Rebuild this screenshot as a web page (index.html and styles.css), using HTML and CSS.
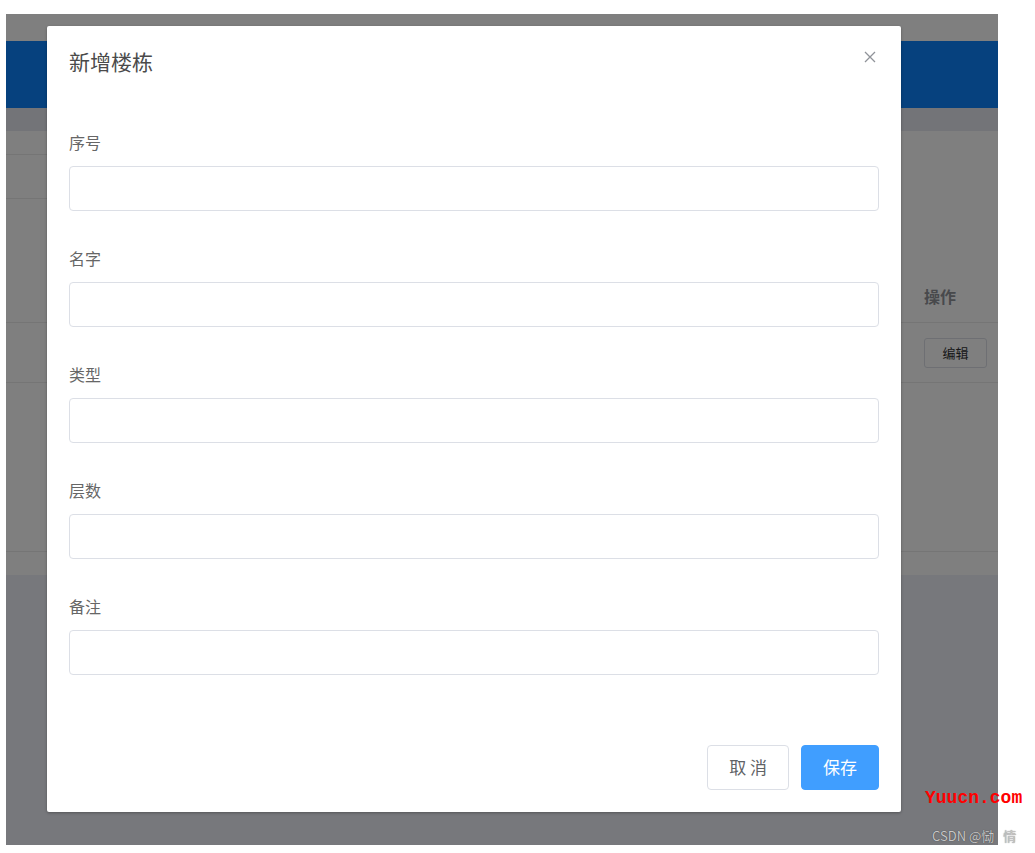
FILE: index.html
```html
<!DOCTYPE html>
<html lang="zh-CN">
<head>
  <meta charset="UTF-8" />
  <title>新增楼栋</title>
  <link rel="stylesheet" href="styles.css">
</head>
<body>
  <div class="shot">
    <div class="page">
      <div class="page-top"></div>
      <div class="page-header"></div>
      <div class="page-tabs"></div>
      <div class="page-main">
        <div class="toolbar">
          <div class="toolbar-row"></div>
          <div class="toolbar-row tall"></div>
        </div>
        <div class="table">
          <div class="table-head">
            <div class="cell-op"><span class="th-op">操作</span></div>
          </div>
          <div class="table-row">
            <div class="cell-op"><button class="btn-mini">编辑</button></div>
          </div>
          <div class="table-empty"></div>
        </div>
      </div>
      <div class="page-foot"></div>
    </div>

    <div class="mask"></div>

    <div class="dialog">
      <div class="dialog-header">
        <span class="dialog-title">新增楼栋</span>
        <button class="dialog-close" aria-label="Close">
          <svg width="12" height="12" viewBox="0 0 12 12">
            <path d="M1 1L11 11M11 1L1 11" stroke="#909399" stroke-width="1.3" fill="none" />
          </svg>
        </button>
      </div>

      <div class="dialog-body">
        <div class="form-item">
          <label>序号</label>
          <input type="text" />
        </div>
        <div class="form-item">
          <label>名字</label>
          <input type="text" />
        </div>
        <div class="form-item">
          <label>类型</label>
          <input type="text" />
        </div>
        <div class="form-item">
          <label>层数</label>
          <input type="text" />
        </div>
        <div class="form-item">
          <label>备注</label>
          <input type="text" />
        </div>
      </div>

      <div class="dialog-footer">
        <button class="btn">取 消</button>
        <button class="btn btn-primary">保存</button>
      </div>
    </div>
  </div>

  <div class="mark">Yuucn.com</div>
  <div class="credit">CSDN @恸<span class="credit-tail">情</span></div>
</body>
</html>
```

FILE: styles.css
```css
body {
  margin: 0;
  background: #fff;
  font-family: "Noto Sans CJK SC", "Noto Sans", sans-serif;
  position: relative;
  height: 853px;
  overflow: hidden;
}

.shot {
  margin: 14px 0 0 6px;
  width: 992px;
  height: 831px;
  position: relative;
  overflow: hidden;
}

/* page behind the dialog */
.page {
  height: 100%;
  display: flex;
  flex-direction: column;
  background: #fff;
}

.page-top {
  height: 27px;
}

.page-header {
  height: 67px;
  background: #0c82fc;
}

.page-tabs {
  height: 23px;
  background: #e6e8f0;
}

.page-main {
  height: 444px;
  box-sizing: border-box;
  padding-bottom: 23px;
}

.toolbar {
  width: 860px;
}

.toolbar-row {
  height: 24px;
  box-sizing: border-box;
  border-bottom: 1px solid #ebebeb;
}

.toolbar-row.tall {
  height: 44px;
}

.table-head,
.table-row {
  display: flex;
  justify-content: flex-end;
  box-sizing: border-box;
  border-bottom: 1px solid #ebebeb;
}

.table-head {
  height: 124px;
  align-items: flex-end;
  padding-bottom: 14px;
}

.table-row {
  height: 60px;
  align-items: center;
}

.table-empty {
  height: 169px;
  box-sizing: border-box;
  border-bottom: 1px solid #ebebeb;
}

.cell-op {
  width: 74px;
}

.th-op {
  font-size: 16px;
  line-height: 23px;
  font-weight: bold;
  color: #909399;
}

.btn-mini {
  width: 63px;
  height: 30px;
  padding: 0;
  border: 1px solid #dcdfe6;
  border-radius: 3px;
  background: #fff;
  color: #303133;
  font-family: inherit;
  font-size: 13px;
}

.page-foot {
  flex: 1;
  background: #eef0f8;
}

.mask {
  position: absolute;
  inset: 0;
  background: rgba(0, 0, 0, 0.5);
}

/* dialog */
.dialog {
  position: absolute;
  left: 41px;
  top: 12px;
  width: 854px;
  background: #fff;
  border-radius: 2px;
  box-shadow: 0 1px 3px rgba(0, 0, 0, 0.3);
}

.dialog-header {
  position: relative;
  padding: 23px 22px 2px;
}

.dialog-title {
  display: block;
  font-size: 21px;
  line-height: 24px;
  color: #4a4a4a;
}

.dialog-close {
  position: absolute;
  top: 25px;
  right: 25px;
  width: 12px;
  height: 12px;
  padding: 0;
  border: none;
  background: none;
  display: flex;
}

.dialog-body {
  padding: 56px 22px 0;
}

.form-item {
  display: flex;
  flex-direction: column;
  margin-bottom: 36px;
}

.form-item:last-child {
  margin-bottom: 0;
}

.form-item label {
  font-size: 16px;
  line-height: 22px;
  color: #666;
  margin-bottom: 13px;
}

.form-item input {
  height: 45px;
  box-sizing: border-box;
  border: 1px solid #dcdfe6;
  border-radius: 4px;
  background: #fff;
  padding: 0 15px;
}

.dialog-footer {
  display: flex;
  justify-content: flex-end;
  gap: 12px;
  padding: 70px 22px 22px;
}

.btn {
  height: 45px;
  padding: 0 21px 3px;
  border: 1px solid #dcdfe6;
  border-radius: 4px;
  background: #fff;
  color: #606266;
  font-family: inherit;
  font-size: 17px;
  line-height: 1;
}

.btn-primary {
  background: #409eff;
  border-color: #409eff;
  color: #fff;
}

/* watermarks */
.mark {
  position: absolute;
  left: 925px;
  top: 787px;
  font-family: "Liberation Mono", monospace;
  font-size: 18px;
  line-height: 22px;
  font-weight: bold;
  color: #f00;
}

.credit {
  position: absolute;
  left: 932px;
  top: 827px;
  font-size: 13px;
  line-height: 18px;
  color: #c8c8c8;
  text-shadow: 0 0 1px rgba(0, 0, 0, 0.6);
}

.credit-tail {
  margin-left: 9px;
}
```
